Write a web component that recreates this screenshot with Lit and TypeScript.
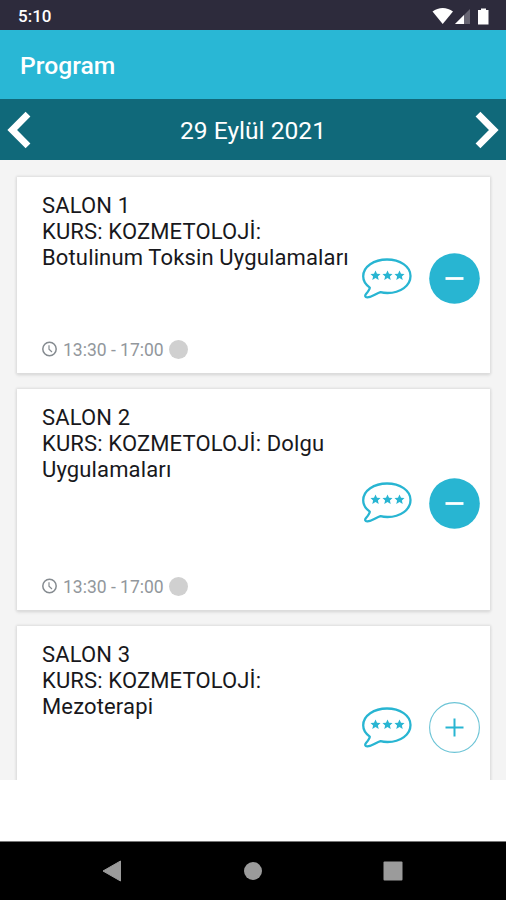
import { LitElement, html, css, svg, nothing } from "lit";
import { customElement, property } from "lit/decorators.js";

interface Session {
  hall: string;
  title: string[];
  time?: string;
  added: boolean;
  size: string;
}

const sessions: Session[] = [
  { hall: "SALON 1", title: ["KURS: KOZMETOLOJİ:", "Botulinum Toksin Uygulamaları"], time: "13:30 - 17:00", added: true, size: "short" },
  { hall: "SALON 2", title: ["KURS: KOZMETOLOJİ: Dolgu", "Uygulamaları"], time: "13:30 - 17:00", added: true, size: "tall" },
  { hall: "SALON 3", title: ["KURS: KOZMETOLOJİ:", "Mezoterapi"], added: false, size: "short" },
];

const star = (x: number) => svg`<path transform="translate(${x} 18.500)" fill="#28b5d2"
  d="M0-5 1.5-1.7 5-1.4 2.4 1 3.2 4.4 0 2.6-3.2 4.4-2.4 1-5-1.4-1.5-1.7Z"/>`;

@customElement("session-card")
export class SessionCard extends LitElement {
  @property({ attribute: false }) session!: Session;

  static styles = css`
    :host { display: block; flex: none; }
    .card {
      box-sizing: border-box;
      display: flex;
      justify-content: space-between;
      background: #fff;
      padding: 16px 10px 0 25px;
      box-shadow: 0 0 2px 1px #dedede, 0 2px 3px #d5d5d5;
    }
    .short { height: 196px; }
    .tall { height: 221px; }
    .info { display: flex; flex-direction: column; justify-content: space-between; white-space: nowrap; }
    .title { font-size: 22px; line-height: 26px; color: #18181c; letter-spacing: 0.14px; }
    .time {
      display: flex;
      align-items: center;
      height: 20px;
      margin-bottom: 14px;
      font-size: 17.5px;
      line-height: 20px;
      color: #92979c;
    }
    .clock { margin-right: 6px; }
    .hours { width: 100px; margin-top: 1px; }
    .dot { width: 19px; height: 19px; border-radius: 50%; background: #d0d0d0; margin-left: 6px; }
    .actions { display: flex; align-items: center; gap: 16px; margin-top: -9px; }
    .chat { margin-top: -2px; }
    svg { display: block; }
  `;

  render() {
    const s = this.session;
    return html`<div class="card ${s.size}">
      <div class="info">
        <div class="title"><div>${s.hall}</div>${s.title.map((t) => html`<div>${t}</div>`)}</div>
        ${s.time
          ? html`<div class="time">
              <svg class="clock" width="15" height="16" viewBox="0 0 15 16" fill="none" stroke="#858b90">
                <circle cx="7.5" cy="8" r="6.7" stroke-width="1.5" /><path d="M7 4.2V8.2L10 11" stroke-width="1.2" />
              </svg>
              <span class="hours">${s.time}</span><span class="dot"></span>
            </div>`
          : nothing}
      </div>
      <div class="actions">
        <svg class="chat" width="52" height="42" viewBox="0 0 52 42">
          <path fill="none" stroke="#28b5d2" stroke-width="2.3" stroke-linejoin="round"
            d="M26 2.5C39 2.5 49.500 9.4 49.500 19S39.500 36 26.500 36C23.500 36 21.500 35.700 19.500 35.200C15 36.500 11.500 40 6.500 40.400C4 40.600 3.600 38.700 5 37.100C7.200 34.600 8.800 32.300 8.800 30.600C4.600 27.700 2.200 24 2.200 19.300C2.200 9.600 13 2.500 26 2.500Z" />
          ${star(14.5)}${star(26.5)}${star(38.5)}
        </svg>
        <svg width="51" height="51" viewBox="0 0 51 51">
          ${s.added
            ? svg`<circle cx="25.500" cy="25.500" r="25.300" fill="#28b5d2"/><path d="M16.500 25.500H34.500" stroke="#fff" stroke-width="2.800"/>`
            : svg`<circle cx="25.500" cy="25.500" r="24.900" fill="none" stroke="#6cc4d6" stroke-width="1.100"/><path d="M16.500 25.500H34.500M25.500 16.500V34.500" stroke="#28b5d2" stroke-width="2"/>`}
        </svg>
      </div>
    </div>`;
  }
}

@customElement("app-root")
export class AppRoot extends LitElement {
  static styles = css`
    :host {
      display: flex;
      flex-direction: column;
      height: 900px;
      overflow: hidden;
      background: #fff;
      font-family: Roboto, "Liberation Sans", sans-serif;
    }
    svg { display: block; }
    .status {
      height: 30px;
      flex: none;
      box-sizing: border-box;
      display: flex;
      justify-content: space-between;
      align-items: center;
      padding: 1px 16px 0 18px;
      background: #2d2b3c;
      color: #fff;
      font-size: 17px;
      font-weight: 500;
    }
    .header {
      height: 69px;
      flex: none;
      display: flex;
      align-items: center;
      padding: 2px 20px 0;
      box-sizing: border-box;
      background: #29b7d5;
      color: #fff;
      font-size: 24.700px;
      font-weight: 500;
    }
    .days {
      height: 61px;
      flex: none;
      display: flex;
      align-items: center;
      justify-content: space-between;
      padding: 0 6px;
      background: #10697a;
      color: #fff;
      font-size: 24.600px;
    }
    .date { padding-top: 1px; }
    .list {
      height: 620px;
      flex: none;
      box-sizing: border-box;
      overflow: hidden;
      display: flex;
      flex-direction: column;
      gap: 16px;
      padding: 17px 16px 0 17px;
      background: #f4f4f4;
    }
    .nav {
      height: 59px;
      flex: none;
      box-sizing: border-box;
      margin-top: auto;
      border-top: 1px solid #777;
      background: #000;
      display: grid;
      grid-template-columns: 224px 58px 224px;
      align-items: center;
    }
    .back { margin-left: 102px; }
    .home { margin-left: 20px; }
    .recent { margin-left: 101px; }
  `;

  render() {
    return html`
      <div class="status">
        <span>5:10</span>
        <svg width="58" height="20" viewBox="0 0 58 20">
          <path d="M0.500 5.500C6.500 .8 15 .8 21 5.500L10.700 18Z" fill="#fff" />
          <path d="M38 3V18H23Z" fill="#686673" /><path d="M32 9V18H23Z" fill="#fff" />
          <path d="M49 2.500H54V4H56.500V18.500H46V4H49Z" fill="#fff" />
        </svg>
      </div>
      <div class="header">Program</div>
      <div class="days">
        <svg width="26" height="40" viewBox="0 0 26 40"><path d="M22 4.200 6.200 20 22 35.800" fill="none" stroke="#fff" stroke-width="6.800" /></svg>
        <span class="date">29 Eylül 2021</span>
        <svg width="26" height="40" viewBox="0 0 26 40"><path d="M4 4.200 19.800 20 4 35.800" fill="none" stroke="#fff" stroke-width="6.800" /></svg>
      </div>
      <div class="list">${sessions.map((s) => html`<session-card .session=${s}></session-card>`)}</div>
      <div class="nav">
        <svg class="back" width="20" height="22" viewBox="0 0 20 22"><path d="M1 11 18.500 1V21Z" fill="#9b9b9b" stroke="#9b9b9b" stroke-linejoin="round" /></svg>
        <svg class="home" width="18" height="18" viewBox="0 0 18 18"><circle cx="9" cy="9" r="9" fill="#9b9b9b" /></svg>
        <svg class="recent" width="20" height="20" viewBox="0 0 20 20"><rect x=".5" y=".5" width="19" height="19" rx="1" fill="#9b9b9b" /></svg>
      </div>
    `;
  }
}
